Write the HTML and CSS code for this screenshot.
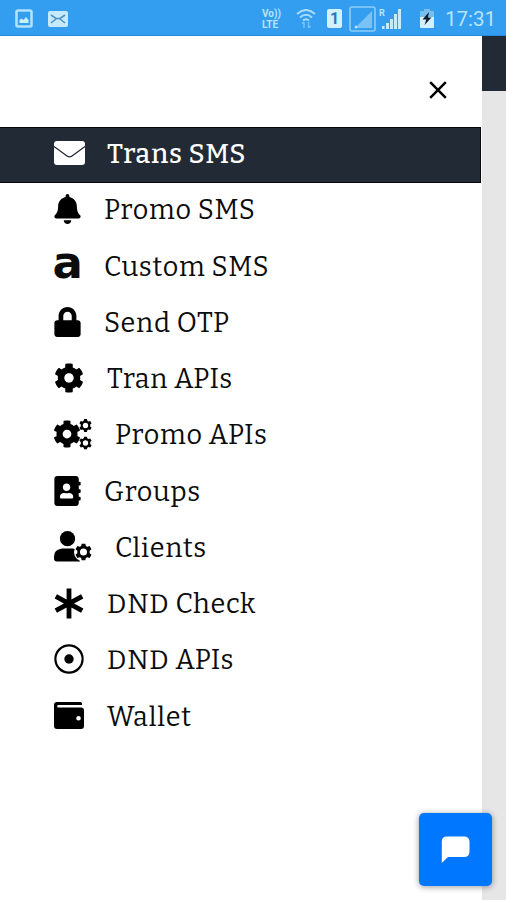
FILE: index.html
```html
<!DOCTYPE html>
<html lang="en">

<head>
    <meta charset="UTF-8">
    <meta name="viewport" content="width=device-width, initial-scale=1">
    <title>SMS</title>
    <link rel="stylesheet" href="styles.css">
</head>

<body>
    <svg class="defs">
        <symbol id="cog" viewBox="0 0 512 512">
            <path d="M487.4 315.7l-42.6-24.6c4.3-23.2 4.3-47 0-70.2l42.6-24.6c4.9-2.8 7.1-8.6 5.5-14-11.1-35.6-30-67.8-54.7-94.6-3.8-4.1-10-5.1-14.8-2.3L380.8 110c-17.9-15.4-38.5-27.3-60.8-35.1V25.8c0-5.6-3.9-10.5-9.4-11.7-36.7-8.2-74.3-7.8-109.2 0-5.5 1.2-9.4 6.1-9.4 11.7V75c-22.2 7.9-42.8 19.8-60.8 35.1L88.7 85.5c-4.9-2.8-11-1.9-14.8 2.3-24.7 26.7-43.6 58.9-54.7 94.6-1.7 5.4.6 11.2 5.5 14L67.3 221c-4.3 23.2-4.3 47 0 70.2l-42.6 24.6c-4.9 2.8-7.1 8.6-5.5 14 11.1 35.6 30 67.8 54.7 94.6 3.8 4.1 10 5.1 14.8 2.3l42.6-24.6c17.9 15.4 38.5 27.3 60.8 35.1v49.2c0 5.6 3.9 10.5 9.4 11.7 36.7 8.2 74.3 7.8 109.2 0 5.5-1.2 9.4-6.1 9.4-11.7v-49.2c22.2-7.9 42.8-19.8 60.8-35.1l42.6 24.6c4.9 2.8 11 1.9 14.8-2.3 24.7-26.7 43.6-58.9 54.7-94.6 1.5-5.5-.7-11.3-5.6-14.1zM256 336c-44.1 0-80-35.9-80-80s35.9-80 80-80 80 35.9 80 80-35.9 80-80 80z"/>
        </symbol>
        <symbol id="cog-small" viewBox="0 0 16 16">
            <path fill-rule="evenodd" d="M6.3 0h3.4l.5 2.3 1.3.8 2.3-.7 1.7 2.9-1.7 1.6v2.2l1.7 1.6-1.7 2.9-2.3-.7-1.3.8-.5 2.3H6.3l-.5-2.300-1.300-.8-2.300.7L.5 10.700l1.700-1.600V6.900L.5 5.300l1.700-2.900 2.300.7 1.300-.8zM8 4.700a3.300 3.300 0 1 0 0 6.600 3.300 3.300 0 0 0 0-6.600z"/>
        </symbol>
    </svg>

    <div class="statusbar">
        <svg class="st-image" width="18" height="19" viewBox="0 0 18 19">
            <rect x="1.5" y="1.5" width="15" height="16" rx="1.5" fill="none" stroke="#aee3fb" stroke-width="2.6"/>
            <path d="M4.500 14V11l2-1.500 2 1.500 2.500-3 2.500 3v3z" fill="#c9eefc"/>
        </svg>
        <svg class="st-mail" width="20" height="16" viewBox="0 0 20 16">
            <rect width="20" height="16" rx="2" fill="#c4eafc"/>
            <path d="M3 4l5 3.500h4L17 4M3 12l5-4M17 12l-5-4" fill="none" stroke="#4b93c4" stroke-width="1.6"/>
        </svg>
        <div class="st-volte">
            <div>Vo))</div>
            <div>LTE</div>
        </div>
        <svg class="st-wifi" width="20" height="20" viewBox="0 0 20 20">
            <g fill="none" stroke="#a9dcfa" stroke-width="2">
                <path d="M1 5Q10-3 19 5M4 8.500Q10 3 16 8.500M7 11.500Q10 9 13 11.500"/>
            </g>
            <path d="M8 13v6M6 15l2-2M12.500 13v6M14.500 17l-2 2" fill="none" stroke="#7cc4f5" stroke-width="1.4"/>
        </svg>
        <div class="st-sim">1</div>
        <svg class="st-signal" width="27" height="26" viewBox="0 0 27 26">
            <rect x="1" y="1" width="25" height="24" rx="2" fill="none" stroke="#8dcdf8" stroke-width="1.6"/>
            <path d="M6 22L23 5v17z" fill="#79c2f6"/>
            <circle cx="7" cy="21" r="1.5" fill="#b5e2fb"/>
        </svg>
        <div class="st-bars">
            <span>R</span>
            <svg width="19" height="20" viewBox="0 0 19 20">
                <path d="M0 17h2.500v3H0zM4 14h3v6H4zM8 10h3v10H8zM12 5h3v15h-3zM16 0h3v20h-3z" fill="#c8ebfc"/>
            </svg>
        </div>
        <svg class="st-battery" width="14" height="19" viewBox="0 0 14 19">
            <path d="M4 0h6v2h3a1 1 0 0 1 1 1v6H0V3a1 1 0 0 1 1-1h3z" fill="#78bff0"/>
            <path d="M0 8h14v10a1 1 0 0 1-1 1H1a1 1 0 0 1-1-1z" fill="#d4f0fd"/>
            <path d="M9 3L2.500 10.500h3.700L4.500 16 11.500 8.500H8z" fill="#10202f"/>
        </svg>
        <span class="st-time">17:31</span>
    </div>

    <div class="screen">
        <nav class="drawer">
            <div class="drawer-top">
                <svg class="close" width="18" height="18" viewBox="0 0 18 18">
                    <path d="M1.200 1.200l15.600 15.600M16.800 1.200L1.200 16.800" stroke="#000" stroke-width="2.5"/>
                </svg>
            </div>
            <a class="item active">
                <svg width="31" height="24" viewBox="0 0 31 24">
                    <rect width="31" height="24" rx="3" fill="#fff"/>
                    <path d="M0 5.500l13 9.500q2.500 1.800 5 0l13-9.500" fill="none" stroke="#222a36" stroke-width="1.3"/>
                </svg>
                <span class="label">Trans SMS</span>
            </a>
            <a class="item">
                <svg width="27" height="30" viewBox="0 0 448 512"><path d="M224 512c35.320 0 63.970-28.650 63.970-64H160.030c0 35.350 28.650 64 63.970 64zm215.390-149.710c-19.320-20.760-55.470-51.990-55.470-154.290 0-77.700-54.480-139.900-127.940-155.160V32c0-17.670-14.320-32-31.980-32s-31.980 14.330-31.980 32v20.840C118.560 68.100 64.080 130.300 64.080 208c0 102.300-36.150 133.530-55.470 154.290-6 6.450-8.660 14.160-8.610 21.710.11 16.400 12.980 32 32.100 32h383.800c19.120 0 32-15.600 32.100-32 .05-7.550-2.610-15.270-8.610-21.710z"/></svg>
                <span class="label">Promo SMS</span>
            </a>
            <a class="item">
                <span class="letter">a</span>
                <span class="label">Custom SMS</span>
            </a>
            <a class="item">
                <svg width="27" height="30" viewBox="0 0 448 512"><path d="M400 224h-24v-72C376 68.200 307.800 0 224 0S72 68.200 72 152v72H48c-26.500 0-48 21.500-48 48v192c0 26.500 21.500 48 48 48h352c26.500 0 48-21.500 48-48V272c0-26.500-21.500-48-48-48zm-104 0H152v-72c0-39.700 32.300-72 72-72s72 32.300 72 72v72z"/></svg>
                <span class="label">Send OTP</span>
            </a>
            <a class="item">
                <svg width="30" height="30"><use href="#cog"/></svg>
                <span class="label">Tran APIs</span>
            </a>
            <a class="item">
                <svg width="38" height="31" viewBox="0 0 38 31">
                    <use href="#cog" x="-1" y="1" width="28" height="28"/>
                    <use href="#cog-small" x="25" y="0" width="13" height="13"/>
                    <use href="#cog-small" x="25" y="17.5" width="13" height="13"/>
                </svg>
                <span class="label">Promo APIs</span>
            </a>
            <a class="item">
                <svg width="27" height="30" viewBox="0 0 448 512"><path d="M436 160c6.600 0 12-5.400 12-12v-40c0-6.600-5.400-12-12-12h-20V48c0-26.500-21.500-48-48-48H48C21.500 0 0 21.500 0 48v416c0 26.500 21.500 48 48 48h320c26.500 0 48-21.500 48-48v-48h20c6.600 0 12-5.400 12-12v-40c0-6.600-5.400-12-12-12h-20v-64h20c6.600 0 12-5.400 12-12v-40c0-6.600-5.400-12-12-12h-20v-64h20zm-228-32c35.300 0 64 28.700 64 64s-28.700 64-64 64-64-28.700-64-64 28.700-64 64-64zm112 236.800c0 10.600-10 19.200-22.400 19.200H118.400C106 384 96 375.400 96 364.800v-19.200c0-31.800 30.100-57.600 67.200-57.600h5c12.300 5.100 25.700 8 39.800 8s27.600-2.900 39.800-8h5c37.100 0 67.200 25.800 67.200 57.600v19.200z"/></svg>
                <span class="label">Groups</span>
            </a>
            <a class="item">
                <svg width="38" height="31" viewBox="0 0 38 31">
                    <circle cx="13.5" cy="7.7" r="7.6"/>
                    <path d="M8 17.500h11q7 1 7 8v5H3q-3 0-3-3V25.500q0-7 8-8z"/>
                    <circle cx="29.5" cy="21" r="9.5" fill="#fff"/>
                    <use href="#cog-small" x="21" y="12.5" width="17" height="17"/>
                </svg>
                <span class="label">Clients</span>
            </a>
            <a class="item">
                <svg width="30" height="31" viewBox="0 0 30 31">
                    <path d="M15 .5v30M1.800 8.300l26.400 14.400M28.200 8.300L1.800 22.700" stroke="#000" stroke-width="4.8"/>
                </svg>
                <span class="label">DND Check</span>
            </a>
            <a class="item">
                <svg width="30" height="30" viewBox="0 0 30 30">
                    <circle cx="15" cy="15" r="13.6" fill="none" stroke="#000" stroke-width="2.2"/>
                    <circle cx="15" cy="15" r="4.7"/>
                </svg>
                <span class="label">DND APIs</span>
            </a>
            <a class="item">
                <svg width="30" height="27" viewBox="0 0 30 27">
                    <path fill-rule="evenodd" d="M3 0h23.500q1.500 0 1.500 1.500V3H4.500Q3.200 3 3.200 4.200t1.300 1.300H27q3 0 3 3V24q0 3-3 3H3q-3 0-3-3V3q0-3 3-3zM24.500 14a2.300 2.300 0 1 0 .01 4.600 2.300 2.300 0 0 0 0-4.600z"/>
                </svg>
                <span class="label">Wallet</span>
            </a>
        </nav>
        <main class="page">
            <header class="page-header"></header>
        </main>
    </div>

    <button class="chat">
        <svg width="30" height="28" viewBox="0 0 30 28">
            <path d="M6 .5h17q5.500 0 5.500 5.500v9.500q0 5.500-5.500 5.500H7L.8 27V5.500Q.8.500 6 .5z" fill="#fff"/>
        </svg>
    </button>
</body>

</html>
```

FILE: styles.css
```css
* {
    box-sizing: border-box;
}

body {
    margin: 0;
    height: 900px;
    display: flex;
    flex-direction: column;
    overflow: hidden;
    background: #fff;
    font-family: "Bitter", "DejaVu Serif Condensed", "DejaVu Serif", serif;
}

.defs {
    display: none;
}

/* status bar */
.statusbar {
    height: 36px;
    flex: none;
    display: flex;
    align-items: center;
    padding: 2px 10px 0 15px;
    background: #339df0;
    border-bottom: 1px solid #258ad9;
    color: #b9e4fb;
    font-family: Roboto, sans-serif;
}

.st-mail {
    margin-left: 15px;
}

.st-volte {
    width: 20px;
    margin-left: 194px;
    font-size: 10px;
    font-weight: 700;
    line-height: 11px;
}

.st-wifi {
    margin-left: 14px;
}

.st-sim {
    width: 15px;
    height: 19px;
    margin-left: 11px;
    border-radius: 2px;
    background: #d4f0fd;
    color: #2879bd;
    font-size: 16px;
    font-weight: 700;
    line-height: 19px;
    text-align: center;
}

.st-signal {
    margin-left: 7px;
}

.st-bars {
    display: flex;
    align-items: flex-start;
    margin-left: 3px;
}

.st-bars span {
    width: 3px;
    font-size: 9px;
    font-weight: 700;
    line-height: 9px;
}

.st-battery {
    margin-left: 19px;
}

.st-time {
    margin-left: auto;
    font-size: 20.5px;
}

/* drawer */
.screen {
    flex: 1;
    display: flex;
}

.drawer {
    width: 482px;
    background: #fff;
}

.drawer-top {
    height: 91px;
    display: flex;
    justify-content: flex-end;
    padding: 45px 35px 0 0;
}

.item {
    height: 56.25px;
    display: flex;
    align-items: center;
    gap: 23.5px;
    margin-right: 1px;
    padding: 0 0 4px 53.5px;
    color: #0c0c0c;
    font-size: 27px;
    letter-spacing: 0.75px;
}

.item svg {
    flex: none;
}

.active {
    gap: 22.5px;
    background: #222a36;
    border: 1px solid #05070d;
    border-left: 0;
    color: #fff;
}

.label {
    padding-top: 2px;
    white-space: nowrap;
}

.active .label {
    font-weight: 500;
}

.letter {
    width: 27px;
    margin-top: -6px;
    margin-left: -1px;
    margin-right: 1px;
    font-family: "DejaVu Sans", sans-serif;
    font-size: 45px;
    font-weight: 700;
    line-height: 40px;
}

/* page behind the drawer */
.page {
    flex: 1;
    background: #e6e6e6;
}

.page-header {
    height: 55px;
    background: #222a36;
}

.chat {
    position: fixed;
    right: 14px;
    bottom: 14px;
    width: 73px;
    height: 73px;
    display: flex;
    align-items: center;
    justify-content: center;
    padding: 0;
    border: 0;
    border-radius: 5px;
    background: #0077ff;
    box-shadow: 0 1px 6px rgba(0, 0, 0, 0.4);
}
```
